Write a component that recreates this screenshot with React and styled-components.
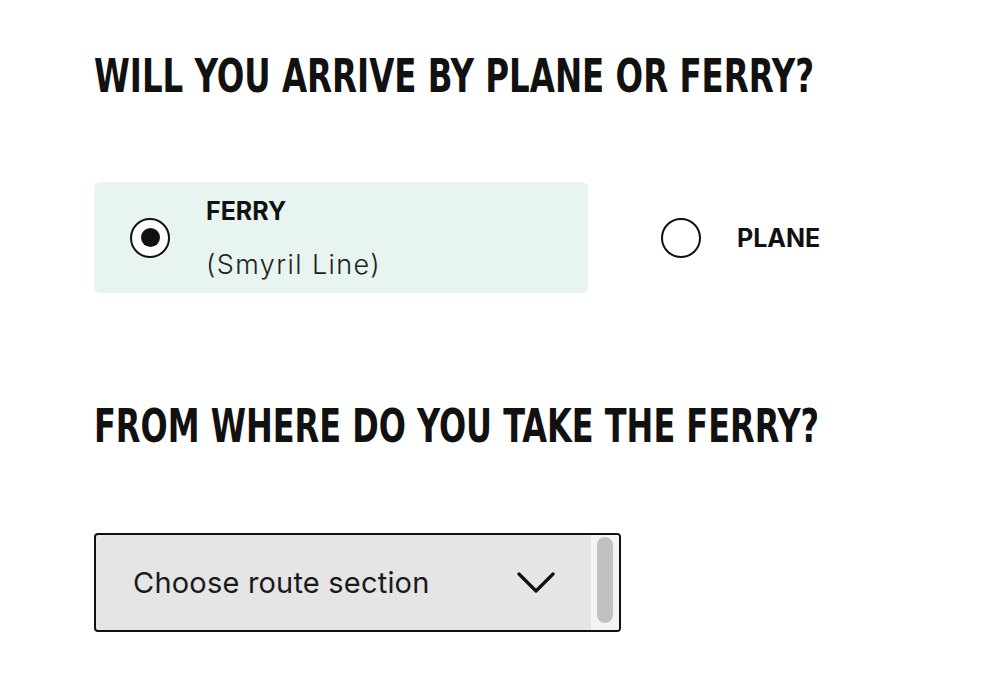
import React, { useState } from 'react';
import styled, { createGlobalStyle } from 'styled-components';

const GlobalStyle = createGlobalStyle`
    html, body {
        margin: 0;
        padding: 0;
        background: #fff;
    }
    body {
        font-family: 'Inter', 'Liberation Sans', sans-serif;
        color: #111;
    }
`;

const options = [
    { id: 'ferry', label: 'FERRY', sub: '(Smyril Line)' },
    { id: 'plane', label: 'PLANE' },
];

function App() {
    const [travel, setTravel] = useState('ferry');

    return (
        <PageStyled>
            <GlobalStyle />
            <Heading>Will you arrive by plane or ferry?</Heading>
            <OptionRow>
                {options.map((o) => (
                    <Option
                        key={o.id}
                        $wide={!!o.sub}
                        $active={travel === o.id}
                        onClick={() => setTravel(o.id)}
                    >
                        <Radio $checked={travel === o.id} />
                        <OptionText>
                            <span className="label">{o.label}</span>
                            {o.sub && <span className="sub">{o.sub}</span>}
                        </OptionText>
                    </Option>
                ))}
            </OptionRow>

            <Heading className="second">From where do you take the ferry?</Heading>
            <SelectBox>
                <div className="value">Choose route section</div>
                <svg className="chevron" width="38" height="22" viewBox="0 0 38 22" fill="none">
                    <path d="M2 2 L19 19 L36 2" stroke="#111" strokeWidth="3.2" strokeLinecap="round" strokeLinejoin="round" />
                </svg>
                <ScrollTrack>
                    <div className="thumb" />
                </ScrollTrack>
            </SelectBox>
        </PageStyled>
    );
}

const PageStyled = styled.main`
    box-sizing: border-box;
    width: 1006px;
    height: 686px;
    padding: 52px 0 0 94px;
    overflow: hidden;

    .second{
        margin-top: 109px;
    }
`;

const Heading = styled.h2`
    margin: 0;
    font-family: 'Liberation Sans Narrow', 'DejaVu Sans Condensed', sans-serif;
    font-weight: 700;
    font-size: 44px;
    line-height: 48px;
    text-transform: uppercase;
    white-space: nowrap;
    color: #111;
    transform: ${({ className }) => (className && className.includes('second') ? 'scale(0.808, 1.03)' : 'scale(0.82, 1.03)')};
    transform-origin: left top;
`;

const OptionRow = styled.div`
    display: flex;
    gap: 37px;
    margin-top: 82px;
`;

const Option = styled.div`
    box-sizing: border-box;
    flex: none;
    width: ${({ $wide }) => ($wide ? '494px' : 'auto')};
    height: 111px;
    padding: 0 36px;
    display: flex;
    align-items: center;
    gap: 36px;
    border-radius: 6px;
    background: ${({ $active }) => ($active ? '#e8f4f0' : 'transparent')};
    cursor: pointer;
`;

const Radio = styled.span`
    box-sizing: border-box;
    flex: none;
    width: 40px;
    height: 40px;
    border-radius: 50%;
    border: 2px solid #111;
    background: #fff;
    display: flex;
    align-items: center;
    justify-content: center;

    &::after{
        content: '';
        width: 19px;
        height: 19px;
        border-radius: 50%;
        background: #111;
        display: ${({ $checked }) => ($checked ? 'block' : 'none')};
    }
`;

const OptionText = styled.div`
    display: flex;
    flex-direction: column;
    gap: 24px;

    .label{
        font-weight: 700;
        font-size: 25px;
        line-height: 30px;
        color: #111;
    }

    .sub{
        font-size: 27px;
        line-height: 30px;
        font-weight: 300;
        letter-spacing: 1.4px;
        color: #222;
    }
`;

const SelectBox = styled.div`
    box-sizing: border-box;
    position: relative;
    margin-top: 83px;
    width: 527px;
    height: 99px;
    border: 2px solid #111;
    border-radius: 4px;
    background: #e5e5e5;
    display: flex;
    align-items: center;
    padding-left: 37px;

    .value{
        flex: 1;
        font-size: 29px;
        letter-spacing: 0.2px;
        color: #1a1a1a;
    }

    .chevron{
        margin-right: 64px;
    }
`;

const ScrollTrack = styled.div`
    position: absolute;
    top: 0;
    right: 0;
    bottom: 0;
    width: 28px;
    background: #f4f4f4;
    border-radius: 0 2px 2px 0;
    padding: 2px 6px 7px;
    box-sizing: border-box;

    .thumb{
        height: 100%;
        border-radius: 8px;
        background: #c1c1c1;
    }
`;

export default App;
